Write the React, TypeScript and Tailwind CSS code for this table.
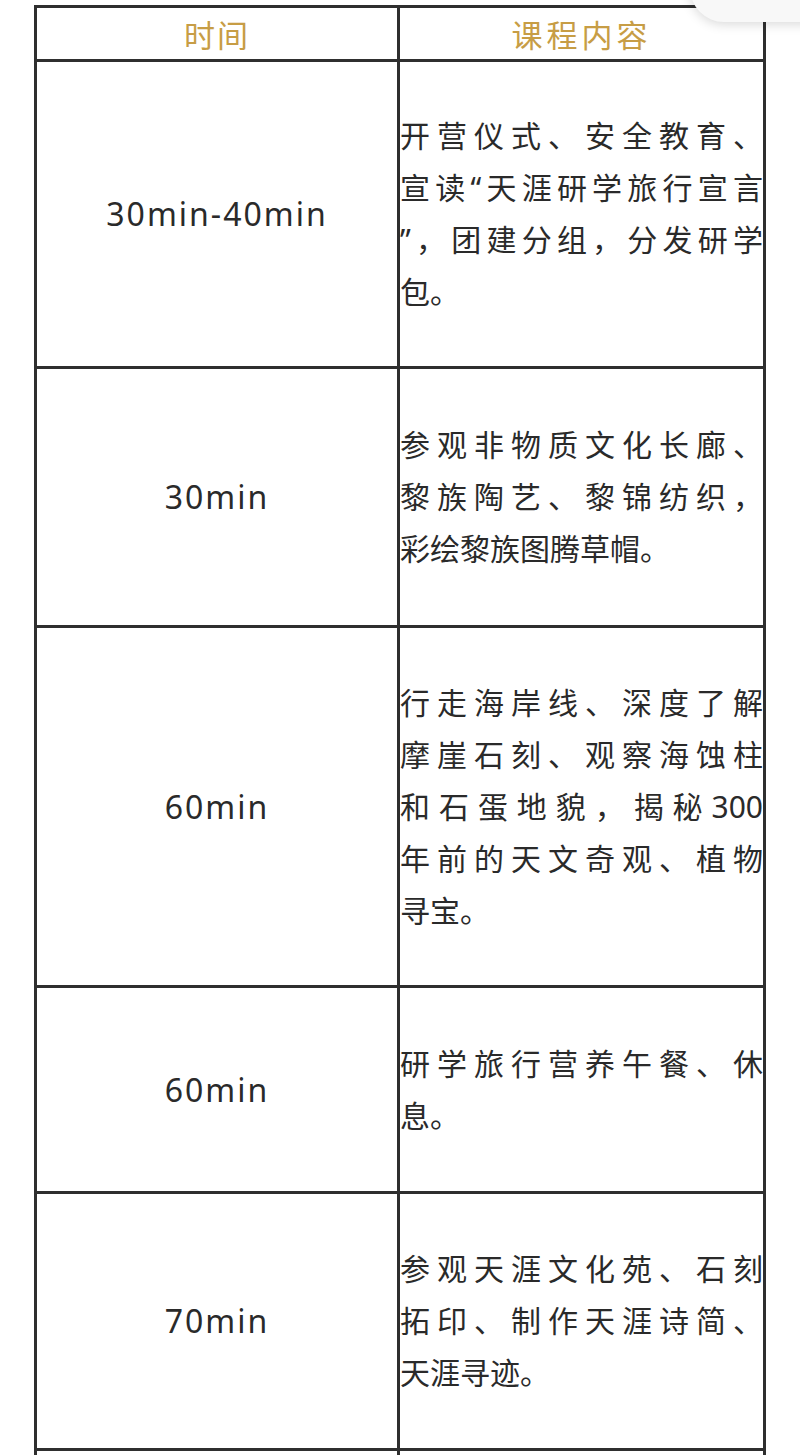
import React from 'react';

// 研学课程安排表 — 两列：时间 / 课程内容

type Row = { time: string; lines: string[]; h: string };

const ROWS: Row[] = [
  { time: '30min-40min', h: 'h-[307px]', lines: ['开营仪式、安全教育、', '宣读“天涯研学旅行宣言', '”，团建分组，分发研学', '包。'] },
  { time: '30min', h: 'h-[259px]', lines: ['参观非物质文化长廊、', '黎族陶艺、黎锦纺织，', '彩绘黎族图腾草帽。'] },
  { time: '60min', h: 'h-[360px]', lines: ['行走海岸线、深度了解', '摩崖石刻、观察海蚀柱', '和石蛋地貌，揭秘300', '年前的天文奇观、植物', '寻宝。'] },
  { time: '60min', h: 'h-[206px]', lines: ['研学旅行营养午餐、休', '息。'] },
  { time: '70min', h: 'h-[257px]', lines: ['参观天涯文化苑、石刻', '拓印、制作天涯诗简、', '天涯寻迹。'] },
];

const FONT = "font-['Noto_Sans','Noto_Sans_CJK_SC',sans-serif]";

export default function App() {
  return (
    <div lang="zh-CN" className={'relative h-[1455px] w-[800px] overflow-hidden bg-white ' + FONT}>
      {/* 右上角的浮层阴影 */}
      <div className="absolute -top-[34px] left-[690px] w-[160px] h-[56px] rounded-bl-[34px] bg-[#f8f8f8] shadow-[0_2px_12px_rgba(0,0,0,0.16)]" />

      <div className="mt-[5px] ml-[34px] w-[732px] border-t-[3px] border-x-[3px] border-[#2f2f2f]">
        {/* Header */}
        <div className="flex h-[54px] border-b-[3px] border-[#2f2f2f]">
          <div className="w-[363px] border-r-[3px] border-[#2f2f2f] flex items-center justify-center">
            <span className="text-[31px] leading-none tracking-[2px] text-[#c79d45] font-['Noto_Sans_CJK_SC',sans-serif]">时间</span>
          </div>
          <div className="w-[363px] flex items-center justify-center">
            <span className="text-[31px] leading-none tracking-[4px] text-[#c79d45] font-['Noto_Sans_CJK_SC',sans-serif]">课程内容</span>
          </div>
        </div>

        {ROWS.map((r, i) => (
          <div key={i} className={'flex border-b-[3px] border-[#2f2f2f] ' + r.h}>
            <div className="w-[363px] border-r-[3px] border-[#2f2f2f] flex items-center justify-center">
              <span className="text-[32px] tracking-[2px] text-[#2a2a2a]">{r.time}</span>
            </div>
            <div className="w-[363px] flex flex-col justify-center">
              {r.lines.map((l, j) => (
                <div key={j}
                  className={'text-[30px] leading-[52px] text-[#2a2a2a] ' +
                    (j < r.lines.length - 1 ? 'text-justify [text-align-last:justify]' : 'text-left')}>
                  {l}
                </div>
              ))}
            </div>
          </div>
        ))}

        {/* 下一行（被截断） */}
        <div className="flex h-[120px]">
          <div className="w-[363px] border-r-[3px] border-[#2f2f2f]" />
          <div className="w-[363px]" />
        </div>
      </div>
    </div>
  );
}
